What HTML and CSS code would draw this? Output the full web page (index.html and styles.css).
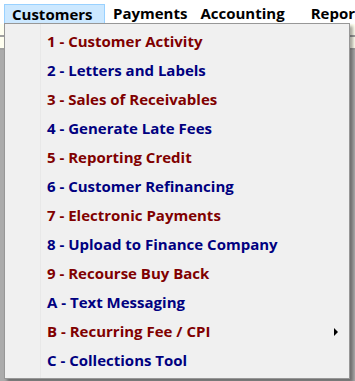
FILE: index.html
```html
<!DOCTYPE html>
<html>

<head>
    <title>Customers Menu</title>
    <link rel="stylesheet" href="styles.css">
</head>

<body>
    <div class="menubar">
        <span class="top-item active">Customers</span>
        <span class="top-item payments">Payments</span>
        <span class="top-item accounting">Accounting</span>
        <span class="top-item reports">Reports</span>
    </div>

    <div class="workspace">
        <div class="strip"></div>
        <div class="strip"></div>

        <ul class="dropdown">
            <li class="odd">1 - Customer Activity</li>
            <li class="even">2 - Letters and Labels</li>
            <li class="odd">3 - Sales of Receivables</li>
            <li class="even">4 - Generate Late Fees</li>
            <li class="odd">5 - Reporting Credit</li>
            <li class="even">6 - Customer Refinancing</li>
            <li class="odd">7 - Electronic Payments</li>
            <li class="even">8 - Upload to Finance Company</li>
            <li class="odd">9 - Recourse Buy Back</li>
            <li class="even">A - Text Messaging</li>
            <li class="odd sub">B - Recurring Fee / CPI</li>
            <li class="even">C - Collections Tool</li>
        </ul>
    </div>
</body>

</html>
```

FILE: styles.css
```css
body {
    margin: 0;
    width: 355px;
    height: 381px;
    overflow: hidden;
    background-color: #ababab;
    font-family: "Open Sans", Arial, sans-serif;
    font-weight: bold;
}

.menubar {
    display: flex;
    height: 24px;
    padding-left: 4px;
    background-color: #fff;
    white-space: nowrap;
    font-size: 15px;
    box-sizing: border-box;
}

.top-item {
    flex-shrink: 0;
    margin-top: 4px;
    line-height: 19px;
    color: #000;
}

.top-item.active {
    width: 92px;
    padding-left: 7px;
    background-color: #cce8ff;
    border: 1px solid #99d1ff;
    border-bottom: none;
    line-height: 18px;
}

.payments {
    margin-left: 8px;
}

.accounting {
    margin-left: 13px;
}

.reports {
    margin-left: 26px;
}

.workspace {
    position: relative;
    height: 357px;
}

.strip {
    height: 11px;
    background-color: #fffff0;
    border-bottom: 2px solid #a0a0a0;
}

.dropdown {
    position: absolute;
    top: -1px;
    left: 4px;
    width: 344px;
    margin: 0;
    padding: 3px 0;
    list-style-type: none;
    background-color: #f0f0f0;
    border: 1px solid #979797;
    box-shadow: 3px 3px 3px rgba(0, 0, 0, 0.35);
    background-image: linear-gradient(to right, #f0f0f0 35px, #e8e8e8 35px, #e8e8e8 36px, #f0f0f0 36px);
}

.dropdown li {
    position: relative;
    height: 29px;
    line-height: 29px;
    padding-left: 42px;
    font-size: 15px;
}

.odd {
    color: #800000;
}

.even {
    color: #000080;
}

.sub::after {
    content: "";
    position: absolute;
    right: 11px;
    top: 11px;
    border-left: 4px solid #000;
    border-top: 4px solid transparent;
    border-bottom: 4px solid transparent;
}
```
